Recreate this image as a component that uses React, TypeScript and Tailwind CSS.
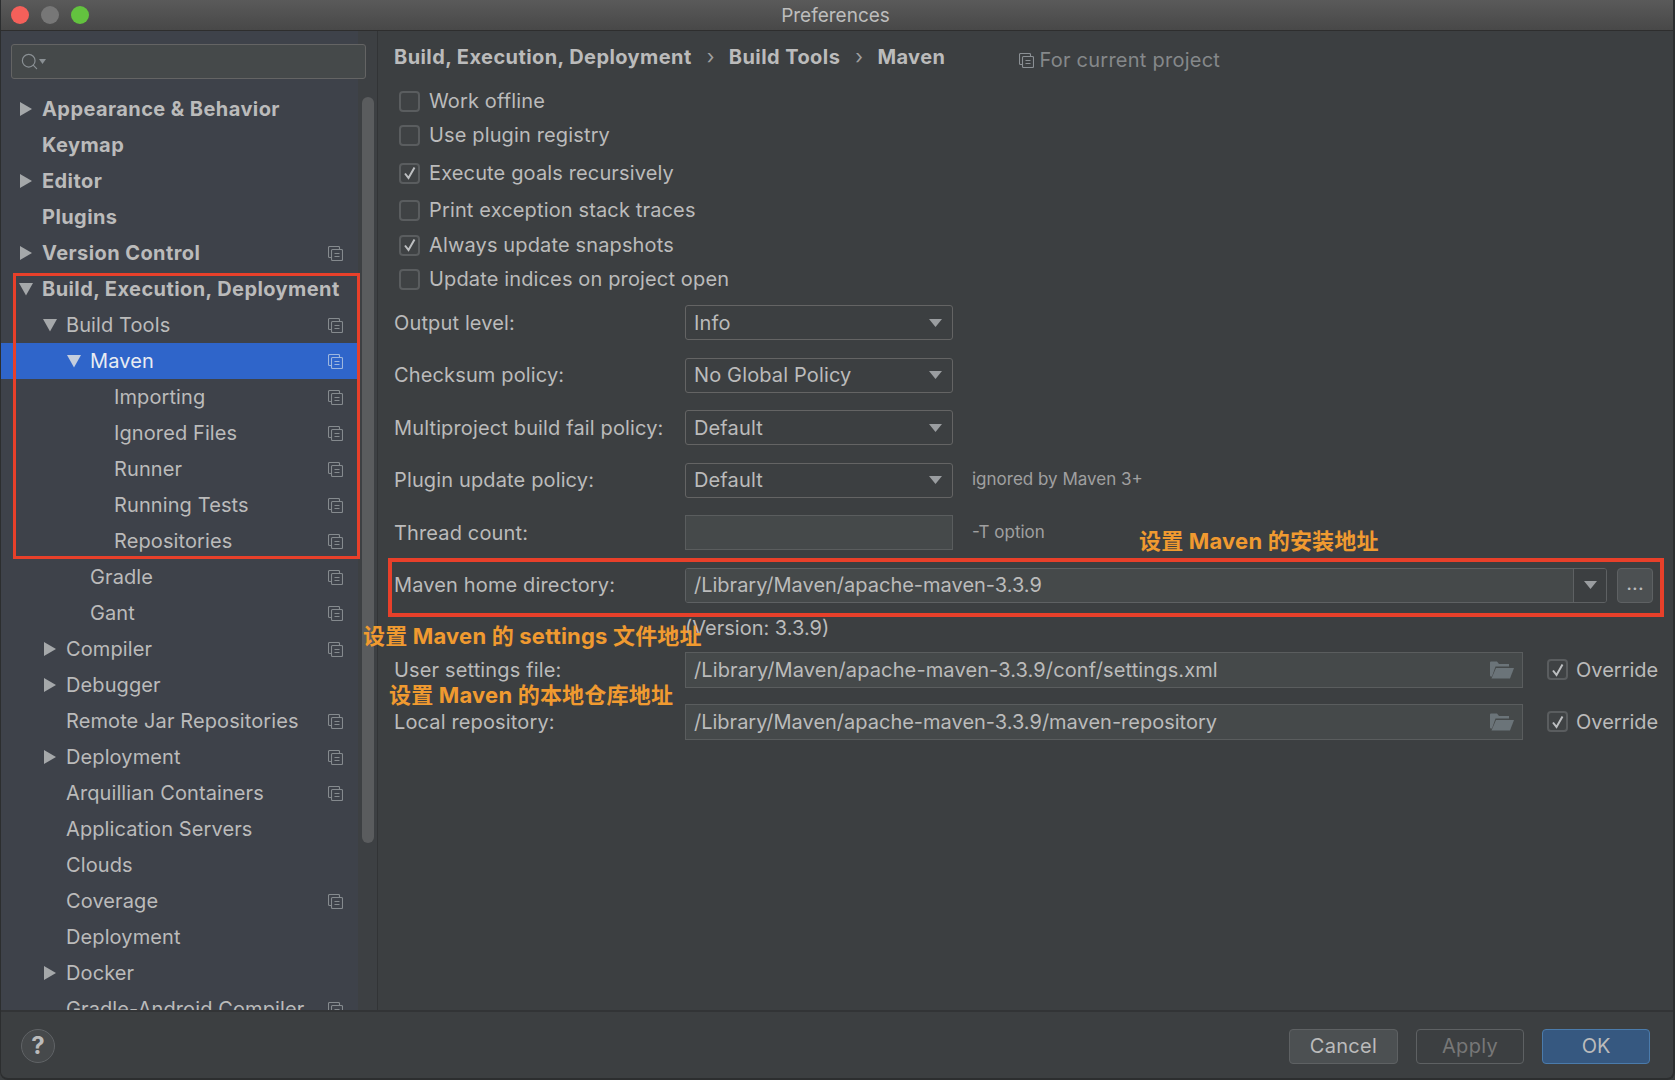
import { Search } from 'lucide-react';

const FONT = 'font-["Inter","Noto_Sans_CJK_SC",sans-serif]';

interface TreeItem {
  label: string;
  level: number;
  arrow?: 'right' | 'down';
  copy?: boolean;
  bold?: boolean;
  selected?: boolean;
}

const tree: TreeItem[] = [
  { label: 'Appearance & Behavior', level: 0, arrow: 'right', bold: true },
  { label: 'Keymap', level: 0, bold: true },
  { label: 'Editor', level: 0, arrow: 'right', bold: true },
  { label: 'Plugins', level: 0, bold: true },
  { label: 'Version Control', level: 0, arrow: 'right', bold: true, copy: true },
  { label: 'Build, Execution, Deployment', level: 0, arrow: 'down', bold: true },
  { label: 'Build Tools', level: 1, arrow: 'down', copy: true },
  { label: 'Maven', level: 2, arrow: 'down', copy: true, selected: true },
  { label: 'Importing', level: 3, copy: true },
  { label: 'Ignored Files', level: 3, copy: true },
  { label: 'Runner', level: 3, copy: true },
  { label: 'Running Tests', level: 3, copy: true },
  { label: 'Repositories', level: 3, copy: true },
  { label: 'Gradle', level: 2, copy: true },
  { label: 'Gant', level: 2, copy: true },
  { label: 'Compiler', level: 1, arrow: 'right', copy: true },
  { label: 'Debugger', level: 1, arrow: 'right' },
  { label: 'Remote Jar Repositories', level: 1, copy: true },
  { label: 'Deployment', level: 1, arrow: 'right', copy: true },
  { label: 'Arquillian Containers', level: 1, copy: true },
  { label: 'Application Servers', level: 1 },
  { label: 'Clouds', level: 1 },
  { label: 'Coverage', level: 1, copy: true },
  { label: 'Deployment', level: 1 },
  { label: 'Docker', level: 1, arrow: 'right' },
  { label: 'Gradle-Android Compiler', level: 1, copy: true },
];

const levelPad = ['pl-[19px]', 'pl-[43px]', 'pl-[67px]', 'pl-[91px]'];

function CopyIcon({ className = '' }: { className?: string }) {
  return (
    <svg width="15" height="15" viewBox="0 0 15 15" fill="none" stroke="currentColor" strokeWidth="1.1" className={className}>
      <path d="M3.5 11.5H1.5a1 1 0 0 1-1-1V1.5a1 1 0 0 1 1-1h9a1 1 0 0 1 1 1V3.5" />
      <rect x="3.5" y="3.5" width="11" height="11" rx="1" />
      <path d="M6.5 7.5h5M6.5 10.5h5" />
    </svg>
  );
}

function Triangle({ dir, className = '' }: { dir: 'right' | 'down'; className?: string }) {
  return (
    <svg width="14" height="14" viewBox="0 0 14 14" fill="currentColor" className={className}>
      {dir === 'right' ? <path d="M1 0l12 7-12 7z" /> : <path d="M0 1h14L7 13.500z" />}
    </svg>
  );
}

function Caret() {
  return (
    <svg width="13" height="8" viewBox="0 0 13 8" fill="#9a9da0">
      <path d="M0 0h13L6.5 8z" />
    </svg>
  );
}

function FolderIcon() {
  return (
    <svg width="24" height="18" viewBox="0 0 24 18" fill="#6b7479">
      <path d="M0 1.5A1 1 0 0 1 1 .5h6l2 2.5h10v2.5H5.5L2 15.5H1a1 1 0 0 1-1-1z" />
      <path d="M6 7h18l-4 10.500H1.500z" />
    </svg>
  );
}

function Tree() {
  return (
    <div className="pt-[12px]">
      {tree.map((item, i) => (
        <div
          key={i}
          className={`relative flex h-[36px] w-[358px] items-center ${levelPad[item.level]} ${
            item.selected ? 'bg-[#2f65ca] text-[#e8ecf2]' : 'text-[#bbbbbb]'
          }`}
        >
          <span className="flex w-[23px] shrink-0 items-center text-[#a5a8aa]">
            {item.arrow && <Triangle dir={item.arrow} className={item.selected ? 'text-[#c4cede]' : ''} />}
          </span>
          <span
            className={`whitespace-nowrap text-[20px] leading-none ${
              item.bold ? 'font-bold tracking-[0.42px]' : 'font-normal tracking-[0.1px]'
            }`}
          >
            {item.label}
          </span>
          {item.copy && (
            <span className={`absolute left-[328px] top-[11px] ${item.selected ? 'text-[#9db6de]' : 'text-[#858a8e]'}`}>
              <CopyIcon />
            </span>
          )}
        </div>
      ))}
    </div>
  );
}

function Checkbox({ checked }: { checked?: boolean }) {
  return (
    <span className="flex h-[21px] w-[21px] shrink-0 items-center justify-center rounded-[4px] border-2 border-[#5a5d5f] bg-[#3f4244]">
      {checked && (
        <svg width="14" height="14" viewBox="0 0 14 14" fill="none" stroke="#bdbfc1" strokeWidth="2">
          <path d="M2 7.500l3.500 4.500L11.500 1.500" />
        </svg>
      )}
    </span>
  );
}

const options = [
  { label: 'Work offline', cls: '' },
  { label: 'Use plugin registry', cls: '' },
  { label: 'Execute goals recursively', cls: 'mt-[4px]', checked: true },
  { label: 'Print exception stack traces', cls: 'mt-[3px]' },
  { label: 'Always update snapshots', cls: 'mt-[1px]', checked: true },
  { label: 'Update indices on project open', cls: '' },
];

function Dropdown({ value }: { value: string }) {
  return (
    <div className="flex h-[35px] w-[268px] items-center justify-between rounded-[3px] border border-[#646464] bg-[#3c3f41] pl-[8px] pr-[10px]">
      <span>{value}</span>
      <Caret />
    </div>
  );
}

function Row({ label, children }: { label: string; children: React.ReactNode }) {
  return (
    <div className="flex h-[35px] items-center">
      <span className="w-[291px] shrink-0 whitespace-nowrap">{label}</span>
      {children}
    </div>
  );
}

function PathField({ value, textClass = 'tracking-normal' }: { value: string; textClass?: string }) {
  return (
    <div className="flex h-[36px] w-[838px] items-center justify-between border border-[#5a5d5e] bg-[#45494a] pl-[8px] pr-[8px]">
      <span className={`whitespace-nowrap ${textClass}`}>{value}</span>
      <FolderIcon />
    </div>
  );
}

function Override() {
  return (
    <div className="ml-[24px] flex items-center gap-[9px]">
      <Checkbox checked />
      <span className="-ml-[1px] tracking-normal">Override</span>
    </div>
  );
}

function MainPanel() {
  return (
    <div className="flex-1 pl-[16px] pt-[8px] text-[20px] tracking-[0.14px] text-[#bbbbbb]">
      <div className="flex h-[36px] items-center whitespace-nowrap font-bold tracking-[0.42px]">
        <span>Build, Execution, Deployment</span>
        <span className="ml-[15px] mr-[14px] font-normal text-[#a0a0a0]">›</span>
        <span>Build Tools</span>
        <span className="ml-[15px] mr-[14px] font-normal text-[#a0a0a0]">›</span>
        <span>Maven</span>
        <span className="ml-[74px] mt-[6px] flex items-center gap-[5px] font-normal tracking-[0.25px] text-[#85888a]">
          <CopyIcon className="text-[#8b9094]" />
          For current project
        </span>
      </div>

      <div className="mt-[9px]">
        {options.map((opt) => (
          <div key={opt.label} className={`flex h-[34px] items-center pl-[5px] ${opt.cls}`}>
            <Checkbox checked={opt.checked} />
            <span className="ml-[9px]">{opt.label}</span>
          </div>
        ))}
      </div>

      <div className="mt-[9px] flex flex-col gap-[17.5px]">
        <Row label="Output level:">
          <Dropdown value="Info" />
        </Row>
        <Row label="Checksum policy:">
          <Dropdown value="No Global Policy" />
        </Row>
        <Row label="Multiproject build fail policy:">
          <Dropdown value="Default" />
        </Row>
        <Row label="Plugin update policy:">
          <Dropdown value="Default" />
          <span className="ml-[19px] text-[17px] tracking-normal text-[#a0a0a0]">ignored by Maven 3+</span>
        </Row>
        <Row label="Thread count:">
          <div className="h-[35px] w-[268px] border border-[#5a5d5e] bg-[#45494a]" />
          <span className="ml-[19px] text-[17px] tracking-normal text-[#a0a0a0]">-T option</span>
        </Row>
        <Row label="Maven home directory:">
          <div className="flex h-[35px] w-[922px] items-center overflow-hidden rounded-[3px] border border-[#5e6163]">
            <span className="flex h-full flex-1 items-center whitespace-nowrap bg-[#45494a] pl-[8px] tracking-normal">
              /Library/Maven/apache-maven-3.3.9
            </span>
            <span className="flex h-full w-[33px] items-center justify-center border-l border-[#5e6163] bg-[#3c3f41]">
              <Caret />
            </span>
          </div>
          <div className="ml-[10px] flex h-[35px] w-[36px] items-center justify-center rounded-[4px] border border-[#5e6163] bg-[#4c5052] pb-[4px]">
            ...
          </div>
        </Row>
      </div>

      <div className="ml-[291px] mt-[13px] h-[24px] leading-[24px] tracking-normal">(Version: 3.3.9)</div>

      <div className="mt-[12px] flex items-center">
        <span className="w-[291px] shrink-0">User settings file:</span>
        <PathField value="/Library/Maven/apache-maven-3.3.9/conf/settings.xml" textClass="tracking-[0.12px]" />
        <Override />
      </div>
      <div className="mt-[16px] flex items-center">
        <span className="w-[291px] shrink-0">Local repository:</span>
        <PathField value="/Library/Maven/apache-maven-3.3.9/maven-repository" />
        <Override />
      </div>
    </div>
  );
}

export default function App() {
  return (
    <div className={`relative flex h-[1080px] w-[1675px] flex-col overflow-hidden bg-[#3c3f41] ${FONT}`}>
      {/* Title bar */}
      <div className="relative flex h-[31px] shrink-0 items-center justify-center border-b border-[#2e2e2e] bg-gradient-to-b from-[#5a5a5a] to-[#484848]">
        <div className="absolute left-[11px] top-[6px] flex gap-[12px]">
          <span className="h-[18px] w-[18px] rounded-full bg-[#f4605a]" />
          <span className="h-[18px] w-[18px] rounded-full bg-[#777777]" />
          <span className="h-[18px] w-[18px] rounded-full bg-[#63c23f]" />
        </div>
        <span className="pr-[4px] pt-[2px] text-[19px] text-[#bdbdbd]">Preferences</span>
      </div>

      <div className="flex min-h-0 flex-1">
        {/* Sidebar */}
        <div className="relative w-[378px] shrink-0 overflow-hidden border-r border-[#323436] bg-[#3e424a]">
          <div className="absolute right-0 top-0 h-full w-[19px] bg-[#3d4043]" />
          <div className="relative mx-[11px] mt-[13px] flex h-[35px] w-[355px] items-center rounded-[3px] border border-[#646464] bg-[#45494a] pl-[8px] text-[#8a9094]">
            <Search size={19} strokeWidth={1.5} />
            <svg width="7" height="5" viewBox="0 0 7 5" fill="currentColor">
              <path d="M0 0h7L3.500 5z" />
            </svg>
          </div>
          <Tree />
          <div className="absolute left-[362px] top-[66px] h-[746px] w-[12px] rounded-full bg-[#5a5c5e]" />
        </div>
        <MainPanel />
      </div>

      {/* Footer */}
      <div className="relative flex h-[70px] shrink-0 items-center justify-between border-t-2 border-[#323436] pl-[21px] pr-[25px] text-[20px]">
        <div className="flex h-[34px] w-[34px] items-center justify-center rounded-full border border-[#606366] bg-[#46494b] text-[24px] font-bold text-[#bbbbbb]">
          ?
        </div>
        <div className="flex gap-[18px]">
          <div className="flex h-[35px] w-[109px] items-center justify-center rounded-[4px] border border-[#5e6163] bg-[#4c5052] tracking-[0.3px] text-[#bbbbbb]">
            Cancel
          </div>
          <div className="flex h-[35px] w-[108px] items-center justify-center rounded-[4px] border border-[#5e6163] bg-[#3c3f41] tracking-[0.3px] text-[#777777]">
            Apply
          </div>
          <div className="flex h-[35px] w-[108px] items-center justify-center rounded-[4px] border border-[#4b7bab] bg-[#365880] text-[#bbbbbb]">
            OK
          </div>
        </div>
      </div>

      {/* Window edge */}
      <div className="pointer-events-none absolute inset-0 rounded-b-[8px] border-b-2 border-l border-r-2 border-[#2c2e2f]" />

      {/* Annotations */}
      <div className="absolute left-[13px] top-[273px] h-[286px] w-[347px] border-[3px] border-[#e8402a]" />
      <div className="absolute left-[388px] top-[558px] h-[59px] w-[1276px] border-[4px] border-[#e8402a]" />
      <span className="absolute left-[1139px] top-[527px] whitespace-nowrap text-[22px] font-bold leading-[28px] tracking-[0.2px] text-[#f09a30]">
        设置 Maven 的安装地址
      </span>
      <span className="absolute left-[363px] top-[622px] whitespace-nowrap text-[22px] font-bold leading-[28px] tracking-[0.2px] text-[#f09a30]">
        设置 Maven 的 settings 文件地址
      </span>
      <span className="absolute left-[389px] top-[681px] whitespace-nowrap text-[22px] font-bold leading-[28px] tracking-[0.2px] text-[#f09a30]">
        设置 Maven 的本地仓库地址
      </span>
    </div>
  );
}
